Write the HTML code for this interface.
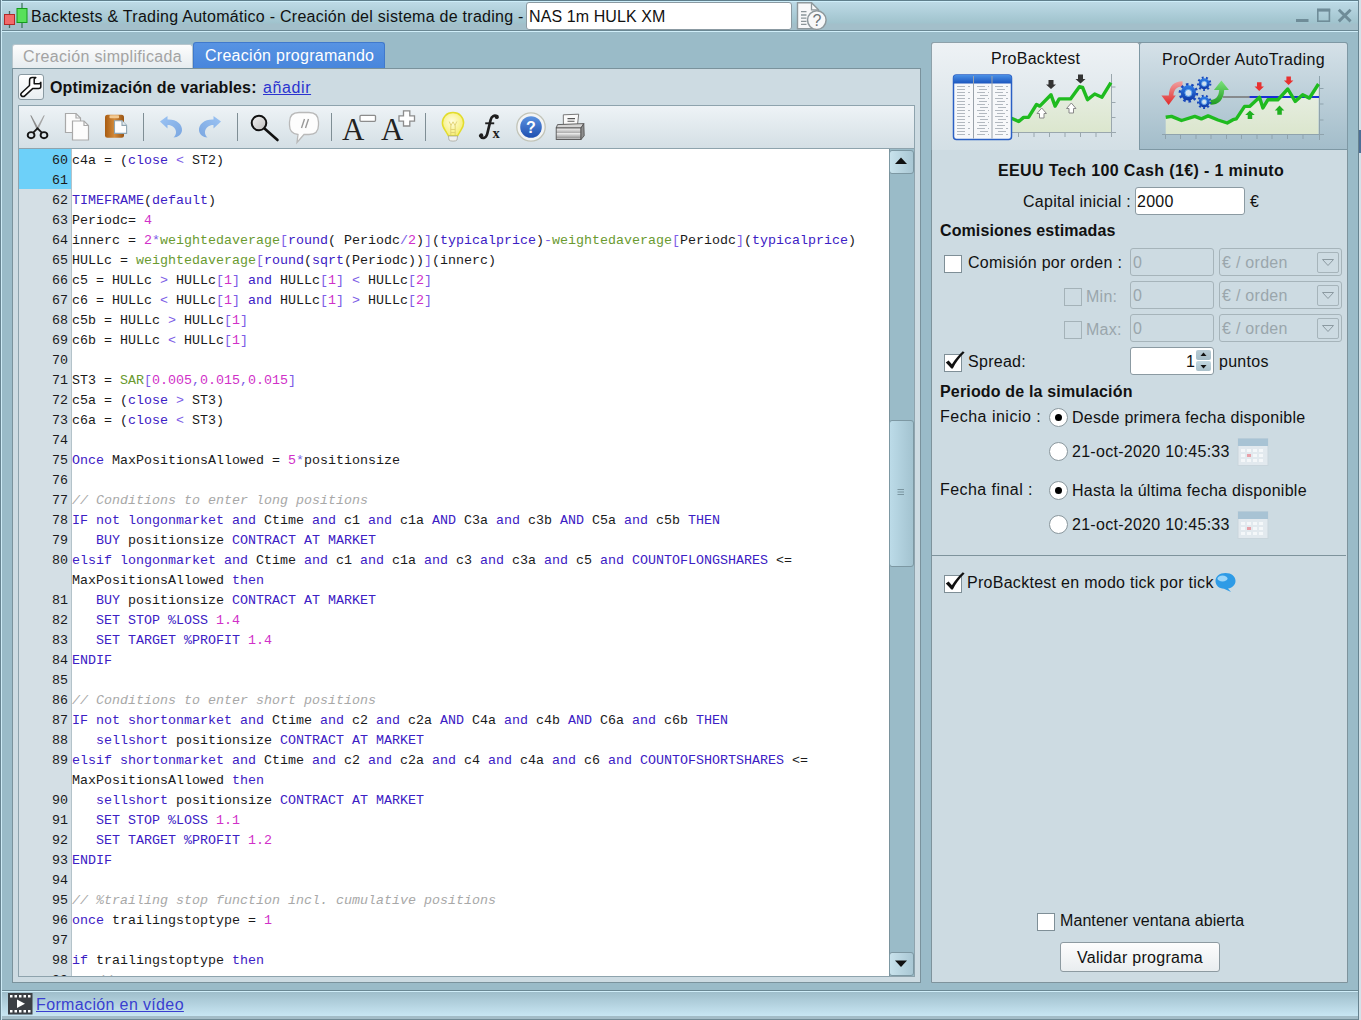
<!DOCTYPE html>
<html><head><meta charset="utf-8">
<style>
*{box-sizing:border-box;margin:0;padding:0}
html,body{width:1361px;height:1020px;overflow:hidden}
body{position:relative;background:#9abbc8;font-family:"Liberation Sans",sans-serif;font-size:16px;color:#111}
.a{position:absolute}
.t{position:absolute;white-space:pre;line-height:20px;letter-spacing:0.28px}
/* title bar */
#title{left:0;top:0;width:1361px;height:32px;background:linear-gradient(#5f7f8c 0,#5f7f8c 1px,#cdeefa 1px,#cdeefa 2px,#bddae6 2px,#a0c3cd 23px,#a3bfca 24px,#a3bfca 30px,#6b8894 30px,#6b8894 31px,#d0eef9 31px)}
.fr{position:absolute;top:0;width:1px;height:1020px}
/* left panel */
#lp{left:12px;top:68px;width:909px;height:915px;background:#cddbe2;border:1px solid #7a929c}
#rp{left:931px;top:42px;width:417px;height:941px;background:#cddbe2;border:1px solid #7e939c;border-radius:3px 3px 0 0}
#tb{left:18px;top:105px;width:897px;height:44px;background:linear-gradient(#eef3f6,#d4dfe5);border:1px solid #8ea3ad}
#code{left:18px;top:149px;width:897px;height:828px;background:#fff;border:1px solid #8ea3ad;border-top:none;overflow:hidden}
#gut{left:0;top:0;width:53px;height:828px;background:#d4dfe5;border-right:1px solid #b4c3ca}
#hl{left:0;top:0;width:52px;height:40px;background:#6dd0f9}
.cw{font-family:"Liberation Mono",monospace;font-size:13.333px;color:#1a1a1a}
.r{height:20px;line-height:20px;white-space:pre}
#gn{position:absolute;left:0;top:2px;width:49px;text-align:right;color:#1a1a1a}
#ct{position:absolute;left:53px;top:2px}
.k{font-weight:normal;color:#3b20c4}
.g{font-weight:normal;color:#6a9a30}
.n{font-weight:normal;color:#d030c8}
.o{font-weight:normal;color:#7c5ce6}
.cm{font-style:italic;color:#a8a8a8}
#sb{left:870px;top:0;width:25px;height:828px;background:#9abbc8;border-left:1px solid #7a929c}
.sbb{position:absolute;left:870px;width:25px;border:1px solid #7d98a3;border-radius:3px;background:linear-gradient(90deg,#c8e2ec,#a9c7d4)}
#status{left:0;top:990px;width:1361px;height:30px;background:linear-gradient(#6b8894 0,#6b8894 1px,#d0eef9 1px,#d0eef9 2px,#9fbecb 2px,#c8e6f3 26px,#a3bcc7 26px,#a3bcc7 29px,#6f8a95 29px)}
.inp{background:#fff;border:1px solid #8b9aa2;border-radius:3px}
.chk{width:18px;height:18px;background:#fff;border:1px solid #7f8f97}
.chk.dis{background:transparent;border-color:#a4b2b8}
.dinp{width:84px;height:28px;border:1px solid #a6b4ba;border-radius:3px}
.dcmb{width:123px;height:28px;border:1px solid #a6b4ba;border-radius:3px}
.dcmb i{position:absolute;left:97px;top:3px;width:22px;height:21px;border:1px solid #a6b4ba;border-radius:2px}
.dt{color:#9aa6ac}
.spin{width:15px;height:10px;background:linear-gradient(#b9ccd5,#a4bcc7);border-radius:2px}
.rad{width:19px;height:19px;border-radius:50%;background:#fff;border:1px solid #8a979d}
.rad.on:after{content:"";position:absolute;left:5px;top:5px;width:7px;height:7px;border-radius:50%;background:#000}
</style></head><body>
<div class="a" id="title"></div>
<div class="t" style="left:31px;top:7px;letter-spacing:0.27px">Backtests &amp; Trading Automático - Creación del sistema de trading -</div>
<div class="a" style="left:526px;top:2px;width:266px;height:28px;background:#fff;border:1px solid #8b9aa2;border-radius:3px"></div>
<div class="t" style="left:529px;top:7px;letter-spacing:0.1px">NAS 1m HULK XM</div>

<div class="a" id="lp"></div>
<div class="a" style="left:12px;top:44px;width:181px;height:24px;background:linear-gradient(#fdfdfd,#e6ecef);border:1px solid #b7c6cd;border-bottom:none;border-radius:3px 3px 0 0"></div>
<div class="t" style="left:23px;top:47px;color:#a3a3a3;letter-spacing:0.33px">Creación simplificada</div>
<div class="a" style="left:193px;top:42px;width:192px;height:26px;background:linear-gradient(#5793e3,#4886dc);border:1px solid #4079cc;border-bottom:none;border-radius:3px 3px 0 0"></div>
<div class="t" style="left:205px;top:46px;color:#fff;letter-spacing:0.28px">Creación programando</div>

<div class="a" style="left:18px;top:74px;width:26px;height:26px;background:linear-gradient(#fff,#e8eef1);border:1px solid #8a9aa2;border-radius:3px"></div>
<div class="t" style="left:50px;top:78px;font-weight:bold;letter-spacing:0.15px">Optimización de variables:</div>
<div class="t" style="left:263px;top:78px;color:#2b33d0;text-decoration:underline;letter-spacing:0.6px">añadir</div>

<div class="a" id="tb"></div>
<div class="a" id="code">
 <div class="a" id="gut"></div>
 <div class="a" id="hl"></div>
 <div id="gn" class="cw">
<div class="r">60</div>
<div class="r">61</div>
<div class="r">62</div>
<div class="r">63</div>
<div class="r">64</div>
<div class="r">65</div>
<div class="r">66</div>
<div class="r">67</div>
<div class="r">68</div>
<div class="r">69</div>
<div class="r">70</div>
<div class="r">71</div>
<div class="r">72</div>
<div class="r">73</div>
<div class="r">74</div>
<div class="r">75</div>
<div class="r">76</div>
<div class="r">77</div>
<div class="r">78</div>
<div class="r">79</div>
<div class="r">80</div>
<div class="r">&nbsp;</div>
<div class="r">81</div>
<div class="r">82</div>
<div class="r">83</div>
<div class="r">84</div>
<div class="r">85</div>
<div class="r">86</div>
<div class="r">87</div>
<div class="r">88</div>
<div class="r">89</div>
<div class="r">&nbsp;</div>
<div class="r">90</div>
<div class="r">91</div>
<div class="r">92</div>
<div class="r">93</div>
<div class="r">94</div>
<div class="r">95</div>
<div class="r">96</div>
<div class="r">97</div>
<div class="r">98</div>
<div class="r">99</div>
 </div>
 <div id="ct" class="cw">
<div class="r">c4a = (<b class="k">close</b> <b class="o">&lt;</b> ST2)</div>
<div class="r">&nbsp;</div>
<div class="r"><b class="k">TIMEFRAME</b>(<b class="k">default</b>)</div>
<div class="r">Periodc= <b class="n">4</b></div>
<div class="r">innerc = <b class="n">2</b><b class="o">*</b><b class="g">weightedaverage</b><b class="o">[</b><b class="k">round</b>( Periodc<b class="o">/</b><b class="n">2</b>)<b class="o">]</b>(<b class="k">typicalprice</b>)<b class="o">-</b><b class="g">weightedaverage</b><b class="o">[</b>Periodc<b class="o">]</b>(<b class="k">typicalprice</b>)</div>
<div class="r">HULLc = <b class="g">weightedaverage</b><b class="o">[</b><b class="k">round</b>(<b class="k">sqrt</b>(Periodc))<b class="o">]</b>(innerc)</div>
<div class="r">c5 = HULLc <b class="o">&gt;</b> HULLc<b class="o">[</b><b class="n">1</b><b class="o">]</b> <b class="k">and</b> HULLc<b class="o">[</b><b class="n">1</b><b class="o">]</b> <b class="o">&lt;</b> HULLc<b class="o">[</b><b class="n">2</b><b class="o">]</b></div>
<div class="r">c6 = HULLc <b class="o">&lt;</b> HULLc<b class="o">[</b><b class="n">1</b><b class="o">]</b> <b class="k">and</b> HULLc<b class="o">[</b><b class="n">1</b><b class="o">]</b> <b class="o">&gt;</b> HULLc<b class="o">[</b><b class="n">2</b><b class="o">]</b></div>
<div class="r">c5b = HULLc <b class="o">&gt;</b> HULLc<b class="o">[</b><b class="n">1</b><b class="o">]</b></div>
<div class="r">c6b = HULLc <b class="o">&lt;</b> HULLc<b class="o">[</b><b class="n">1</b><b class="o">]</b></div>
<div class="r">&nbsp;</div>
<div class="r">ST3 = <b class="g">SAR</b><b class="o">[</b><b class="n">0.005</b><b class="o">,</b><b class="n">0.015</b><b class="o">,</b><b class="n">0.015</b><b class="o">]</b></div>
<div class="r">c5a = (<b class="k">close</b> <b class="o">&gt;</b> ST3)</div>
<div class="r">c6a = (<b class="k">close</b> <b class="o">&lt;</b> ST3)</div>
<div class="r">&nbsp;</div>
<div class="r"><b class="k">Once</b> MaxPositionsAllowed = <b class="n">5</b><b class="o">*</b>positionsize</div>
<div class="r">&nbsp;</div>
<div class="r"><i class="cm">// Conditions to enter long positions</i></div>
<div class="r"><b class="k">IF</b> <b class="k">not</b> <b class="k">longonmarket</b> <b class="k">and</b> Ctime <b class="k">and</b> c1 <b class="k">and</b> c1a <b class="k">AND</b> C3a <b class="k">and</b> c3b <b class="k">AND</b> C5a <b class="k">and</b> c5b <b class="k">THEN</b></div>
<div class="r">   <b class="k">BUY</b> positionsize <b class="k">CONTRACT</b> <b class="k">AT</b> <b class="k">MARKET</b></div>
<div class="r"><b class="k">elsif</b> <b class="k">longonmarket</b> <b class="k">and</b> Ctime <b class="k">and</b> c1 <b class="k">and</b> c1a <b class="k">and</b> c3 <b class="k">and</b> c3a <b class="k">and</b> c5 <b class="k">and</b> <b class="k">COUNTOFLONGSHARES</b> &lt;=</div>
<div class="r">MaxPositionsAllowed <b class="k">then</b></div>
<div class="r">   <b class="k">BUY</b> positionsize <b class="k">CONTRACT</b> <b class="k">AT</b> <b class="k">MARKET</b></div>
<div class="r">   <b class="k">SET</b> <b class="k">STOP</b> <b class="k">%LOSS</b> <b class="n">1.4</b></div>
<div class="r">   <b class="k">SET</b> <b class="k">TARGET</b> <b class="k">%PROFIT</b> <b class="n">1.4</b></div>
<div class="r"><b class="k">ENDIF</b></div>
<div class="r">&nbsp;</div>
<div class="r"><i class="cm">// Conditions to enter short positions</i></div>
<div class="r"><b class="k">IF</b> <b class="k">not</b> <b class="k">shortonmarket</b> <b class="k">and</b> Ctime <b class="k">and</b> c2 <b class="k">and</b> c2a <b class="k">AND</b> C4a <b class="k">and</b> c4b <b class="k">AND</b> C6a <b class="k">and</b> c6b <b class="k">THEN</b></div>
<div class="r">   <b class="k">sellshort</b> positionsize <b class="k">CONTRACT</b> <b class="k">AT</b> <b class="k">MARKET</b></div>
<div class="r"><b class="k">elsif</b> <b class="k">shortonmarket</b> <b class="k">and</b> Ctime <b class="k">and</b> c2 <b class="k">and</b> c2a <b class="k">and</b> c4 <b class="k">and</b> c4a <b class="k">and</b> c6 <b class="k">and</b> <b class="k">COUNTOFSHORTSHARES</b> &lt;=</div>
<div class="r">MaxPositionsAllowed <b class="k">then</b></div>
<div class="r">   <b class="k">sellshort</b> positionsize <b class="k">CONTRACT</b> <b class="k">AT</b> <b class="k">MARKET</b></div>
<div class="r">   <b class="k">SET</b> <b class="k">STOP</b> <b class="k">%LOSS</b> <b class="n">1.1</b></div>
<div class="r">   <b class="k">SET</b> <b class="k">TARGET</b> <b class="k">%PROFIT</b> <b class="n">1.2</b></div>
<div class="r"><b class="k">ENDIF</b></div>
<div class="r">&nbsp;</div>
<div class="r"><i class="cm">// %trailing stop function incl. cumulative positions</i></div>
<div class="r"><b class="k">once</b> trailingstoptype = <b class="n">1</b></div>
<div class="r">&nbsp;</div>
<div class="r"><b class="k">if</b> trailingstoptype <b class="k">then</b></div>
<div class="r">   <i class="cm">// </i></div>
 </div>
 <div class="a" id="sb"></div>
 <div class="sbb" style="top:1px;height:24px"></div>
 <div class="sbb" style="top:803px;height:24px"></div>
 <div class="sbb" style="top:271px;height:147px;background:linear-gradient(90deg,#bcdbe8,#a3c3d0)"></div>
</div>

<div class="a" id="rp"></div>
<div class="a" style="left:931px;top:42px;width:209px;height:108px;background:linear-gradient(#eef2f5,#d3dfe5);border:1px solid #8ea1aa;border-bottom:none;border-radius:3px 3px 0 0"></div>
<div class="a" style="left:1139px;top:42px;width:209px;height:108px;background:linear-gradient(#d5e1e8,#a3bdca);border:1px solid #7e98a4;border-radius:3px 3px 0 0"></div>
<div class="t" style="left:991px;top:49px">ProBacktest</div>
<div class="t" style="left:1162px;top:50px;letter-spacing:0.35px">ProOrder AutoTrading</div>

<div class="t" style="left:998px;top:161px;font-weight:bold;letter-spacing:0.37px">EEUU Tech 100 Cash (1€) - 1 minuto</div>
<div class="t" style="left:1023px;top:192px">Capital inicial :</div>
<div class="a inp" style="left:1135px;top:187px;width:110px;height:28px"></div>
<div class="t" style="left:1137px;top:192px">2000</div>
<div class="t" style="left:1250px;top:192px">€</div>
<div class="t" style="left:940px;top:221px;font-weight:bold;letter-spacing:0.1px">Comisiones estimadas</div>

<div class="a chk" style="left:944px;top:255px"></div>
<div class="t" style="left:968px;top:253px">Comisión por orden :</div>
<div class="a chk dis" style="left:1064px;top:288px"></div>
<div class="t" style="left:1086px;top:287px;color:#9aa6ac">Min:</div>
<div class="a chk dis" style="left:1064px;top:321px"></div>
<div class="t" style="left:1086px;top:320px;color:#9aa6ac">Max:</div>

<div class="a dinp" style="left:1130px;top:248px"></div>
<div class="t dt" style="left:1133px;top:253px">0</div>
<div class="a dcmb" style="left:1219px;top:248px"><i></i></div>
<div class="t dt" style="left:1222px;top:253px">€ / orden</div>
<div class="a dinp" style="left:1130px;top:281px"></div>
<div class="t dt" style="left:1133px;top:286px">0</div>
<div class="a dcmb" style="left:1219px;top:281px"><i></i></div>
<div class="t dt" style="left:1222px;top:286px">€ / orden</div>
<div class="a dinp" style="left:1130px;top:314px"></div>
<div class="t dt" style="left:1133px;top:319px">0</div>
<div class="a dcmb" style="left:1219px;top:314px"><i></i></div>
<div class="t dt" style="left:1222px;top:319px">€ / orden</div>

<div class="a chk" style="left:944px;top:354px"></div>
<div class="t" style="left:968px;top:352px">Spread:</div>
<div class="a inp" style="left:1130px;top:347px;width:84px;height:28px"></div>
<div class="t" style="left:1186px;top:352px">1</div>
<div class="a spin" style="left:1196px;top:350px"></div>
<div class="a spin" style="left:1196px;top:361px;background:linear-gradient(#c2d8e1,#a9c0ca)"></div>
<div class="t" style="left:1219px;top:352px">puntos</div>

<div class="t" style="left:940px;top:382px;font-weight:bold;letter-spacing:0.17px">Periodo de la simulación</div>
<div class="t" style="left:940px;top:407px;letter-spacing:0.5px">Fecha inicio :</div>
<div class="a rad on" style="left:1049px;top:408px"></div>
<div class="t" style="left:1072px;top:408px">Desde primera fecha disponible</div>
<div class="a rad" style="left:1049px;top:442px"></div>
<div class="t" style="left:1072px;top:442px">21-oct-2020 10:45:33</div>
<div class="t" style="left:940px;top:480px;letter-spacing:0.45px">Fecha final :</div>
<div class="a rad on" style="left:1049px;top:481px"></div>
<div class="t" style="left:1072px;top:481px">Hasta la última fecha disponible</div>
<div class="a rad" style="left:1049px;top:515px"></div>
<div class="t" style="left:1072px;top:515px">21-oct-2020 10:45:33</div>

<div class="a" style="left:932px;top:555px;width:414px;height:1px;background:#7e939c"></div>
<div class="a chk" style="left:944px;top:575px"></div>
<div class="t" style="left:967px;top:573px">ProBacktest en modo tick por tick</div>

<div class="a chk" style="left:1037px;top:913px"></div>
<div class="t" style="left:1060px;top:911px;letter-spacing:0.08px">Mantener ventana abierta</div>
<div class="a" style="left:1060px;top:942px;width:160px;height:30px;background:linear-gradient(#fdfdfd,#e9edef);border:1px solid #8d9aa1;border-radius:3px"></div>
<div class="t" style="left:1077px;top:948px">Validar programa</div>

<div class="a" id="status"></div>
<div class="t" style="left:36px;top:995px;color:#3a3fd0;text-decoration:underline;letter-spacing:0.36px">Formación en vídeo</div>
<div class="fr" style="left:0;background:#678390"></div><div class="fr" style="left:1px;background:#cdeaf5"></div><div class="fr" style="left:1358px;background:#678390"></div><div class="a" style="left:1359px;top:0;width:2px;height:1020px;background:#d3e2e9"></div><div class="a" style="left:1359px;top:130px;width:2px;height:23px;background:#4d6f96"></div>
<svg class="a" style="left:0;top:0;pointer-events:none" width="1361" height="1020" viewBox="0 0 1361 1020">
<defs>
 <linearGradient id="cf1" x1="0" y1="0" x2="0" y2="1"><stop offset="0" stop-color="#e9efe6"/><stop offset="1" stop-color="#dbe6cd"/></linearGradient>
 <linearGradient id="sh" x1="0" y1="0" x2="0" y2="1"><stop offset="0" stop-color="#4a90e6"/><stop offset="1" stop-color="#1b55be"/></linearGradient>
 <linearGradient id="gear" x1="0" y1="0" x2="0" y2="1"><stop offset="0" stop-color="#2f7ee8"/><stop offset="1" stop-color="#0f38a6"/></linearGradient>
 <linearGradient id="redA" x1="0" y1="0" x2="0" y2="1"><stop offset="0" stop-color="#f0a0a0"/><stop offset="1" stop-color="#e02a2a"/></linearGradient>
 <linearGradient id="grnA" x1="0" y1="1" x2="0" y2="0"><stop offset="0" stop-color="#1e9a1e"/><stop offset="1" stop-color="#7ce27c"/></linearGradient>
</defs>
<!-- ProBacktest chart -->
<path d="M1011.5,118.3 L1018.8,121.5 L1023.6,117.4 L1028.5,117.4 L1036.5,104.5 L1039.8,106.1 L1051,94.8 L1055.1,106.1 L1059.2,98.9 L1070.5,98.9 L1079.4,86.7 L1082.6,87.5 L1087.5,99.7 L1094.7,94 L1102,97.2 L1110.9,82.7 L1110.9,133 L1011.5,133 Z" fill="url(#cf1)"/>
<g stroke="#9aa7ad" stroke-width="1">
<line x1="1111.5" y1="74" x2="1111.5" y2="137"/>
<line x1="1011" y1="132.5" x2="1116" y2="132.5"/>
<line x1="1111.5" y1="87" x2="1115.5" y2="87"/><line x1="1111.5" y1="102.5" x2="1115.5" y2="102.5"/><line x1="1111.5" y1="117.5" x2="1115.5" y2="117.5"/>
<line x1="1018.5" y1="133" x2="1018.5" y2="137"/><line x1="1034" y1="133" x2="1034" y2="137"/><line x1="1049.5" y1="133" x2="1049.5" y2="137"/><line x1="1065" y1="133" x2="1065" y2="137"/><line x1="1080.5" y1="133" x2="1080.5" y2="137"/><line x1="1096" y1="133" x2="1096" y2="137"/>
</g>
<polyline points="1011.5,118.3 1018.8,121.5 1023.6,117.4 1028.5,117.4 1036.5,104.5 1039.8,106.1 1051,94.8 1055.1,106.1 1059.2,98.9 1070.5,98.9 1079.4,86.7 1082.6,87.5 1087.5,99.7 1094.7,94 1102,97.2 1110.9,82.7" fill="none" stroke="#1fbb1f" stroke-width="3.4" stroke-linejoin="round"/>
<path d="M1048.5,80 H1053.5 V84.5 H1056 L1051,89 L1046,84.5 H1048.5 Z" fill="#333"/>
<path d="M1078,74.5 H1083 V79 H1085.5 L1080.5,83.5 L1075.5,79 H1078 Z" fill="#333"/>
<path d="M1039.5,118 H1044 V113.5 H1046.5 L1041.7,108 L1037,113.5 H1039.5 Z" fill="#fff" stroke="#888" stroke-width="1"/>
<path d="M1069,113 H1073.5 V108.5 H1076 L1071.3,103 L1066.5,108.5 H1069 Z" fill="#fff" stroke="#888" stroke-width="1"/>
<!-- spreadsheet -->
<g transform="translate(0,1)">
<rect x="953.5" y="74" width="58" height="64.5" rx="3" fill="#f7f8fa" stroke="#2a5fc4" stroke-width="1.5"/>
<path d="M953.5,82.5 V77 A3,3 0 0 1 956.5,74 H1008.5 A3,3 0 0 1 1011.5,77 V82.5 Z" fill="url(#sh)"/>
<line x1="973.5" y1="75" x2="973.5" y2="137.5" stroke="#9aa2aa" stroke-width="1"/>
<line x1="992" y1="75" x2="992" y2="137.5" stroke="#9aa2aa" stroke-width="1"/>
<g stroke="#a9b0b8" stroke-width="0.9" stroke-dasharray="8 3 5 2">
<path d="M957,85.5 H970 M957,88.5 H968 M957,91.5 H970 M957,94.5 H966 M957,97.5 H970 M957,100.5 H967 M957,103.5 H970 M957,106.5 H968 M957,109.5 H970 M957,112.5 H966 M957,115.5 H970 M957,118.5 H968 M957,121.5 H970 M957,124.5 H966 M957,127.5 H970 M957,130.5 H968 M957,133.5 H970"/>
<path d="M977,85.5 H989 M979,88.5 H989 M977,91.5 H989 M980,94.5 H989 M977,97.5 H989 M979,100.5 H989 M977,103.5 H989 M980,106.5 H989 M977,109.5 H989 M979,112.5 H989 M977,115.5 H989 M980,118.5 H989 M977,121.5 H989 M979,124.5 H989 M977,127.5 H989 M980,130.5 H989 M977,133.5 H989"/>
<path d="M995,85.5 H1008 M997,88.5 H1008 M995,91.5 H1008 M998,94.5 H1008 M995,97.5 H1008 M997,100.5 H1008 M995,103.5 H1008 M998,106.5 H1008 M995,109.5 H1008 M997,112.5 H1008 M995,115.5 H1008 M998,118.5 H1008 M995,121.5 H1008 M997,124.5 H1008 M995,127.5 H1008 M998,130.5 H1008 M995,133.5 H1008"/>
</g>

</g>
<!-- ProOrder chart -->
<path d="M1165.7,117.2 L1171.5,116.4 L1181.5,120.5 L1194.8,116.4 L1201.4,118.9 L1208.1,115.9 L1218,120 L1227.2,123 L1233,119.7 L1236.3,118.9 L1244.6,106.4 L1249.6,106.4 L1259.5,97.3 L1262.9,108 L1267.8,99.8 L1277.8,99.8 L1287.8,89 L1295.2,101.4 L1302.7,94.8 L1309.4,98.1 L1318.5,84 L1318.5,134.5 L1165.7,134.5 Z" fill="url(#cf1)"/>
<g stroke="#8fa3ad" stroke-width="1">
<line x1="1319.5" y1="76" x2="1319.5" y2="140"/>
<line x1="1162" y1="134.5" x2="1324" y2="134.5"/>
<line x1="1319.5" y1="88.5" x2="1323.5" y2="88.5"/><line x1="1319.5" y1="104" x2="1323.5" y2="104"/><line x1="1319.5" y1="120" x2="1323.5" y2="120"/>
<line x1="1165.5" y1="135" x2="1165.5" y2="139"/><line x1="1180.5" y1="135" x2="1180.5" y2="139"/><line x1="1196" y1="135" x2="1196" y2="139"/><line x1="1211" y1="135" x2="1211" y2="139"/><line x1="1226.5" y1="135" x2="1226.5" y2="139"/><line x1="1241.5" y1="135" x2="1241.5" y2="139"/><line x1="1257" y1="135" x2="1257" y2="139"/><line x1="1272" y1="135" x2="1272" y2="139"/><line x1="1287.5" y1="135" x2="1287.5" y2="139"/><line x1="1303" y1="135" x2="1303" y2="139"/>
</g>
<line x1="1223" y1="97" x2="1250" y2="97" stroke="#7a7a7a" stroke-width="1.6"/>
<line x1="1249.6" y1="97" x2="1319" y2="97" stroke="#1a2fd8" stroke-width="1.8"/>
<polyline points="1165.7,117.2 1171.5,116.4 1181.5,120.5 1194.8,116.4 1201.4,118.9 1208.1,115.9 1218,120 1227.2,123 1233,119.7 1236.3,118.9 1244.6,106.4 1249.6,106.4 1259.5,97.3 1262.9,108 1267.8,99.8 1277.8,99.8 1287.8,89 1295.2,101.4 1302.7,94.8 1309.4,98.1 1318.5,84" fill="none" stroke="#1fbb1f" stroke-width="3.4" stroke-linejoin="round"/>
<path d="M1257,82.3 H1261.5 V86.5 H1264 L1259.2,91 L1254.5,86.5 H1257 Z" fill="#e83030"/>
<path d="M1286.4,76.5 H1290.9 V80.5 H1293.4 L1288.6,85 L1283.9,80.5 H1286.4 Z" fill="#e83030"/>
<path d="M1247.7,119 H1252.2 V115 H1254.7 L1249.9,110.5 L1245.2,115 H1247.7 Z" fill="#1fb01f"/>
<path d="M1277.3,114.7 H1281.8 V110.5 H1284.3 L1279.5,105.6 L1274.8,110.5 H1277.3 Z" fill="#1fb01f"/>
<!-- red curved arrow -->
<path d="M1182.5,81.2 C1174,81.2 1169.2,86 1168.8,95.6 L1161.4,95.6 L1168.6,105 L1175.8,95.6 L1173.4,95.6 C1173.8,89.4 1177,86.4 1182.5,86.4 Z" fill="url(#redA)"/>
<!-- green curved arrow -->
<path d="M1210.5,104.8 C1218.5,104.8 1223.8,100 1224.2,90 L1228.9,90 L1221.4,80.5 L1213.9,90 L1219.2,90 C1218.8,96.8 1215.5,99.8 1210.5,99.8 Z" fill="url(#grnA)"/>
<!-- gears -->
<g>
<circle cx="1188.4" cy="92.9" r="8.4" fill="none" stroke="#1848bc" stroke-width="2.8" stroke-dasharray="2.5 2.77"/>
<circle cx="1188.4" cy="92.9" r="7.6" fill="url(#gear)"/>
<circle cx="1188.4" cy="92.9" r="3.5" fill="#cfe0f0" stroke="#5aa2ee" stroke-width="1"/>
<circle cx="1204.2" cy="83.7" r="6.1" fill="none" stroke="#1848bc" stroke-width="2.2" stroke-dasharray="1.9 2.36"/>
<circle cx="1204.2" cy="83.7" r="5.5" fill="url(#gear)"/>
<circle cx="1204.2" cy="83.7" r="2.6" fill="#cfe0f0" stroke="#5aa2ee" stroke-width="0.8"/>
<circle cx="1204.2" cy="101.9" r="6.1" fill="none" stroke="#1848bc" stroke-width="2.2" stroke-dasharray="1.9 2.36"/>
<circle cx="1204.2" cy="101.9" r="5.5" fill="url(#gear)"/>
<circle cx="1204.2" cy="101.9" r="2.6" fill="#cfe0f0" stroke="#5aa2ee" stroke-width="0.8"/>
</g>

<!-- calendars -->
<g id="cal1">
<rect x="1238" y="438.5" width="30" height="27" fill="#e2e9ee" stroke="#c9d5dc" stroke-width="1"/>
<rect x="1238" y="438.5" width="30" height="7.5" fill="#a8c3d4"/>
<g fill="#f4f7f9">
<rect x="1241" y="449" width="4" height="3"/><rect x="1247" y="449" width="4" height="3"/><rect x="1253" y="449" width="4" height="3"/><rect x="1259" y="449" width="4" height="3"/>
<rect x="1241" y="454" width="4" height="3"/><rect x="1253" y="454" width="4" height="3"/><rect x="1259" y="454" width="4" height="3"/>
<rect x="1241" y="459" width="4" height="3"/><rect x="1247" y="459" width="4" height="3"/><rect x="1253" y="459" width="4" height="3"/><rect x="1259" y="459" width="4" height="3"/>
</g>
<rect x="1247" y="454" width="4" height="3" fill="#e8a0a8"/>
</g>
<use href="#cal1" transform="translate(0,73)"/>

<!-- checkmarks -->
<path d="M945.8,362.6 L948.6,360.6 L951.9,364.2 C955,359.5 958.5,355 962.8,351.2 L964.6,352.6 C959.5,357.5 955.6,362.8 952.8,368.6 L951.4,368.6 Z" fill="#111"/>
<path d="M945.8,583.6 L948.6,581.6 L951.9,585.2 C955,580.5 958.5,576 962.8,572.2 L964.6,573.6 C959.5,578.5 955.6,583.8 952.8,589.6 L951.4,589.6 Z" fill="#111"/>

<!-- blue bubble -->
<path d="M1225.5,573 C1231.5,573 1235.5,576.5 1235.5,581 C1235.5,585 1232,588 1228,588.5 L1231,592 L1224,588.8 C1219,588.5 1215.5,585.5 1215.5,581 C1215.5,576.5 1219.5,573 1225.5,573 Z" fill="#2e9be6"/>
<ellipse cx="1222.5" cy="578.5" rx="5" ry="3" fill="#a8dcfa" opacity="0.9"/>
</svg>

<svg class="a" style="left:0;top:0;pointer-events:none" width="1361" height="1020" viewBox="0 0 1361 1020">
<defs>
 <linearGradient id="gBlue" x1="0" y1="0" x2="0" y2="1"><stop offset="0" stop-color="#5b92e0"/><stop offset="1" stop-color="#1f4fb0"/></linearGradient>
 <linearGradient id="gArrow" x1="0" y1="0" x2="1" y2="1"><stop offset="0" stop-color="#9cc4f4"/><stop offset="1" stop-color="#7aa6e0"/></linearGradient>
 <linearGradient id="gClip" x1="0" y1="0" x2="1" y2="0"><stop offset="0" stop-color="#a85c12"/><stop offset="0.5" stop-color="#d38a3a"/><stop offset="1" stop-color="#9a5514"/></linearGradient>
 <radialGradient id="gBulb" cx="0.45" cy="0.4" r="0.6"><stop offset="0" stop-color="#fffde0"/><stop offset="1" stop-color="#f6ee70"/></radialGradient>
 <linearGradient id="gPrn" x1="0" y1="0" x2="0" y2="1"><stop offset="0" stop-color="#f2f2f2"/><stop offset="1" stop-color="#8c8c8c"/></linearGradient>
 <linearGradient id="gMag" x1="0" y1="0" x2="1" y2="1"><stop offset="0" stop-color="#f4f4f4"/><stop offset="1" stop-color="#bdbdbd"/></linearGradient>
 <linearGradient id="gChartFill" x1="0" y1="0" x2="0" y2="1"><stop offset="0" stop-color="#eef2ea"/><stop offset="1" stop-color="#d9e4cc"/></linearGradient>
 <linearGradient id="gSheet" x1="0" y1="0" x2="0" y2="1"><stop offset="0" stop-color="#3f86e0"/><stop offset="1" stop-color="#1a56c0"/></linearGradient>
</defs>

<!-- title candle icon -->
<line x1="9.5" y1="11" x2="9.5" y2="28" stroke="#4a6a62" stroke-width="1.3"/>
<rect x="4.5" y="14.5" width="10" height="10" fill="#f26a6a" stroke="#b42828" stroke-width="1"/>
<line x1="22" y1="3" x2="22" y2="28" stroke="#3e7a5c" stroke-width="1.3"/>
<rect x="17" y="8.5" width="10" height="14" fill="#58e05a" stroke="#139a1a" stroke-width="1"/>

<!-- help doc icon -->
<path d="M797.5,2.8 H811.5 L818.5,9.8 V28.8 H797.5 Z" fill="#f7f8f9" stroke="#8e989c" stroke-width="1.4"/>
<path d="M811.5,2.8 V9.8 H818.5" fill="none" stroke="#8e989c" stroke-width="1.3"/>
<path d="M801,11.7 H806.5 M801,15 H806.5 M801,18.2 H806.5 M801,21.3 H806.5 M801,24.3 H806.5" stroke="#8b9599" stroke-width="1.3"/>
<circle cx="816.8" cy="20.1" r="9.3" fill="#f7f8f9" stroke="#8e989c" stroke-width="1.5"/>
<text x="817" y="26" font-family="Liberation Sans" font-size="16" fill="#6c7478" text-anchor="middle">?</text>
<!-- window controls -->
<rect x="1296" y="19" width="12.5" height="3" fill="#6f8c98"/>
<rect x="1317.8" y="9.6" width="11.6" height="11.6" fill="none" stroke="#6f8c98" stroke-width="1.6"/>
<rect x="1317" y="8.6" width="13.2" height="3" fill="#6f8c98"/>
<path d="M1338.8,9.8 L1350.6,21.4 M1350.6,9.8 L1338.8,21.4" stroke="#6f8c98" stroke-width="2.9"/>

<!-- wrench -->
<path d="M21.5,93 L29.5,85.5 L29.6,79.8 C29.7,78.2 30.7,77.4 32.2,77.4 L35.8,77.4 L34.2,79 L34.2,83.8 L39.6,83.8 L40.8,82.4 L40.8,86.6 C40.8,87.9 40,88.6 38.7,88.6 L32.6,88.6 L24.8,95.9 C23.9,96.8 22.4,96.8 21.5,95.9 C20.7,95.1 20.7,93.8 21.5,93 Z" fill="#fff" stroke="#111" stroke-width="1.5" stroke-linejoin="round"/>
<!-- scissors -->
<path d="M30.2,115.2 L31.4,115.4 L38.6,128.6 L37.2,130.6 Z" fill="#8c8c8c"/>
<path d="M44.8,115.2 L43.6,115.4 L36.4,128.6 L37.8,130.6 Z" fill="#a4a4a4"/>
<path d="M33.2,132.6 L37.5,128.3 L41.8,132.6" fill="none" stroke="#1a1a1a" stroke-width="1.7"/>
<ellipse cx="31.1" cy="135.2" rx="3.4" ry="3.1" fill="none" stroke="#151515" stroke-width="1.9"/>
<ellipse cx="44" cy="135.2" rx="3.4" ry="3.1" fill="none" stroke="#151515" stroke-width="1.9"/>

<!-- copy -->
<path d="M65.5,113.5 H76 L80.5,118 V132.5 H65.5 Z" fill="#fbfbfb" stroke="#a9a9a9" stroke-width="1.2"/>
<path d="M76,113.5 V118 H80.5" fill="none" stroke="#a9a9a9" stroke-width="1.2"/>
<path d="M72.5,121 H84 L88.5,125.5 V140 H72.5 Z" fill="#fcfcfc" stroke="#a9a9a9" stroke-width="1.2"/>
<path d="M84,121 V125.5 H88.5" fill="none" stroke="#a9a9a9" stroke-width="1.2"/>

<!-- paste -->
<rect x="105" y="114.8" width="19" height="23" rx="2.5" fill="url(#gClip)"/>
<rect x="109.5" y="115.2" width="9.5" height="3" rx="0.8" fill="#f2c890"/>
<path d="M114.5,120.8 H122 L126.6,125.4 V133.4 H114.5 Z" fill="#fdfdfd" stroke="#8ea5b2" stroke-width="1.1"/>
<path d="M122,120.8 V125.4 H126.6" fill="#e8eef2" stroke="#8ea5b2" stroke-width="1.1"/>

<!-- separators -->
<line x1="143.5" y1="113" x2="143.5" y2="141" stroke="#7f8e95" stroke-width="1"/>
<line x1="237.5" y1="113" x2="237.5" y2="141" stroke="#7f8e95" stroke-width="1"/>
<line x1="331.5" y1="113" x2="331.5" y2="141" stroke="#7f8e95" stroke-width="1"/>
<line x1="425.5" y1="113" x2="425.5" y2="141" stroke="#7f8e95" stroke-width="1"/>

<!-- undo / redo -->
<path id="undo" d="M160,121.5 L167.5,116 V119.5 C176,119 182.5,124 182,130.5 C181.5,134.5 178,137.5 173.5,137.5 C176.5,135 177,130.5 174,127.5 C172,125.5 169.5,125 167.5,125 V128.5 Z" fill="url(#gArrow)"/>
<use href="#undo" transform="translate(381,0) scale(-1,1)"/>

<!-- magnifier -->
<circle cx="259" cy="123" r="7.3" fill="url(#gMag)" stroke="#111" stroke-width="2"/>
<line x1="264.5" y1="128.5" x2="277.5" y2="140" stroke="#111" stroke-width="2.6" stroke-linecap="round"/>

<!-- comment bubble -->
<path d="M299,112.5 H309 C315,112.5 318.5,116 318.5,122 V125 C318.5,131 315,134.5 309,134.5 H304 L297,142.5 L298,134.5 C292.5,134 289.5,130.5 289.5,125 V122 C289.5,116 293,112.5 299,112.5 Z" fill="#fdfdfd" stroke="#b9b9b9" stroke-width="1.3"/>
<path d="M301.5,128 L304.5,119 M305.5,128 L308.5,119" stroke="#9a9a9a" stroke-width="1.4"/>

<!-- A- A+ -->
<text x="342" y="139.5" font-family="Liberation Serif" font-size="31" fill="#222">A</text>
<rect x="360" y="115.3" width="15.5" height="6" rx="1" fill="#fff" stroke="#8c8c8c" stroke-width="1.3"/>
<text x="381" y="139.5" font-family="Liberation Serif" font-size="31" fill="#222">A</text>
<path d="M403.5,110.8 H409.8 V115.8 H414.5 V121.2 H409.8 V126 H403.5 V121.2 H399 V115.8 H403.5 Z" fill="#fff" stroke="#8c8c8c" stroke-width="1.3"/>

<!-- bulb -->
<path d="M453,112.6 C459.6,112.6 463.6,117.4 463.6,123 C463.6,127.6 460.6,130.4 459.2,133 L457.6,135.8 H448.4 L446.8,133 C445.4,130.4 442.4,127.6 442.4,123 C442.4,117.4 446.4,112.6 453,112.6 Z" fill="url(#gBulb)" stroke="#e2dc2c" stroke-width="1.5"/>
<path d="M449.2,121.5 L451,125.5 L453,121.8 L455,125.5 L456.8,121.5 M450.8,125.5 V135 M455.2,125.5 V135 M450.8,129.5 H455.2 M450.8,132.5 H455.2" fill="none" stroke="#e0d070" stroke-width="0.9"/>
<path d="M448.4,136 H457.6 L457,140 C456,141.5 450,141.5 449,140 Z" fill="#f0f0ee" stroke="#a8a8a0" stroke-width="0.8"/>
<!-- fx -->
<path d="M480.2,135.8 C482,139.2 486,138.6 487.2,134 L490.6,120 C491.6,116 494.4,114.8 497.2,116.3" fill="none" stroke="#1e1e1e" stroke-width="2.7" stroke-linecap="round"/>
<circle cx="481.3" cy="135.2" r="1.9" fill="#1e1e1e"/>
<circle cx="496.8" cy="117.2" r="1.9" fill="#1e1e1e"/>
<path d="M485.2,123.3 H494.2" stroke="#1e1e1e" stroke-width="1.9"/>
<text x="492.6" y="137.8" font-family="Liberation Serif" font-weight="bold" font-size="14.5" fill="#1e1e1e">x</text>
<!-- help -->
<circle cx="531" cy="127" r="14.2" fill="#f2f4f5" stroke="#c2c4b8" stroke-width="1.3"/>
<circle cx="531" cy="127" r="10.8" fill="url(#gBlue)"/>
<text x="531" y="133" font-family="Liberation Sans" font-weight="bold" font-size="16" fill="#fff" text-anchor="middle">?</text>

<!-- printer -->
<linearGradient id="gPrnF" x1="0" y1="0" x2="0" y2="1"><stop offset="0" stop-color="#f6f6f6"/><stop offset="0.45" stop-color="#a8a8a8"/><stop offset="0.46" stop-color="#ececec"/><stop offset="0.85" stop-color="#9a9a9a"/><stop offset="0.86" stop-color="#d8d8d8"/><stop offset="1" stop-color="#8a8a8a"/></linearGradient>
<path d="M563.3,114.8 L578.7,114.2 L577.5,124.8 H563.4 Z" fill="#fafafa" stroke="#6a6a6a" stroke-width="0.9"/>
<path d="M567.5,118.6 H575 M567.5,121.2 H574.5" stroke="#555" stroke-width="1.1"/>
<path d="M557.5,124.6 L583.8,123.6 L581,128 H556.2 Z" fill="#d4d4d4" stroke="#555" stroke-width="0.9" stroke-linejoin="round"/>
<rect x="556.2" y="128" width="24.8" height="11.5" fill="url(#gPrnF)" stroke="#555" stroke-width="0.9"/>
<path d="M581,128 L583.8,123.6 L584.2,135.8 L581,139.5 Z" fill="#8e8e8e" stroke="#555" stroke-width="0.9" stroke-linejoin="round"/>

<!-- scrollbar arrows -->
<path d="M895,164 L901,157.5 L907,164 Z" fill="#111"/>
<path d="M895,960.5 L901,967 L907,960.5 Z" fill="#111"/>
<path d="M897.5,489.5 H904 M897.5,492 H904 M897.5,494.5 H904" stroke="#6c8691" stroke-width="0.8"/>

<!-- film icon -->
<rect x="8" y="993" width="24.5" height="21.5" fill="#3b3f44"/>
<g fill="#fff">
<rect x="10" y="995" width="2.5" height="2.5"/><rect x="14.5" y="995" width="2.5" height="2.5"/><rect x="19" y="995" width="2.5" height="2.5"/><rect x="23.5" y="995" width="2.5" height="2.5"/><rect x="28" y="995" width="2.5" height="2.5"/>
<rect x="10" y="1010" width="2.5" height="2.5"/><rect x="14.5" y="1010" width="2.5" height="2.5"/><rect x="19" y="1010" width="2.5" height="2.5"/><rect x="23.5" y="1010" width="2.5" height="2.5"/><rect x="28" y="1010" width="2.5" height="2.5"/>
<path d="M17,999.5 L25,1003.8 L17,1008 Z"/>
</g>

<!-- spinner arrows -->
<path d="M1200.5,356 L1203.5,352.5 L1206.5,356 Z" fill="#111"/>
<path d="M1200.5,365 L1203.5,368.5 L1206.5,365 Z" fill="#111"/>
<!-- combo triangles -->
<path d="M1322.5,259.5 H1333.5 L1328,265.5 Z" fill="none" stroke="#8c9aa1" stroke-width="1"/>
<path d="M1322.5,292.5 H1333.5 L1328,298.5 Z" fill="none" stroke="#8c9aa1" stroke-width="1"/>
<path d="M1322.5,325.5 H1333.5 L1328,331.5 Z" fill="none" stroke="#8c9aa1" stroke-width="1"/>
</svg>

</body></html>
